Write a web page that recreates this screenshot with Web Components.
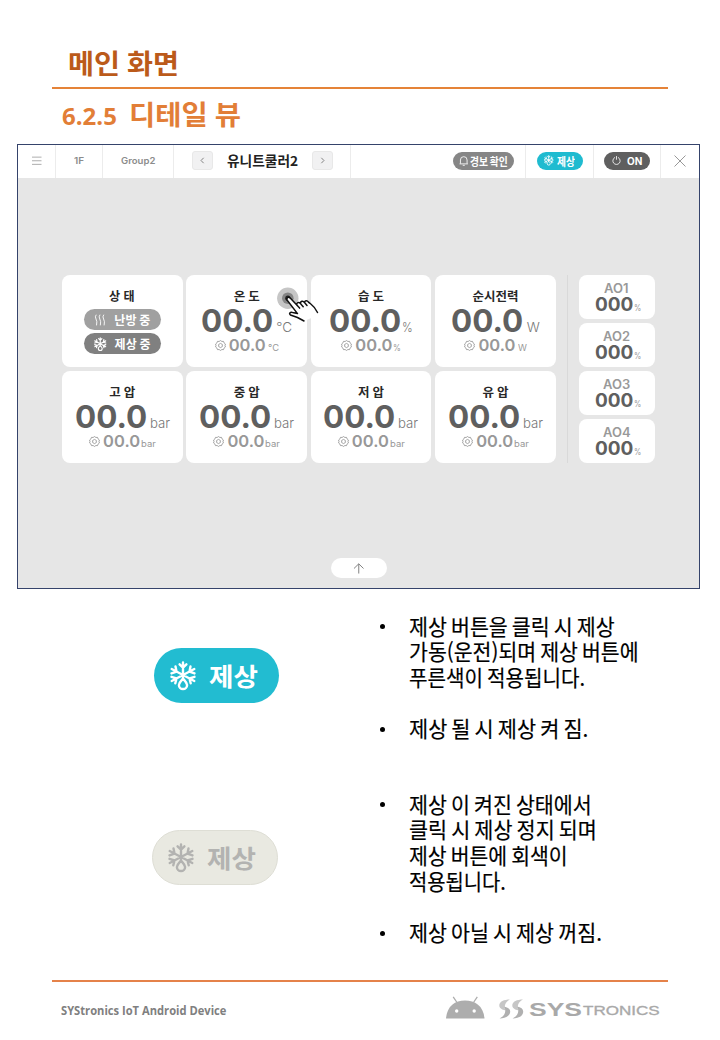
<!DOCTYPE html>
<html lang="ko">
<head>
<meta charset="utf-8">
<title>디테일 뷰</title>
<style>
html,body{margin:0;padding:0;background:#fff}
body{width:720px;height:1040px;overflow:hidden;font-family:"Noto Sans CJK KR","Noto Sans",sans-serif}
</style>
</head>
<body>
<manual-page></manual-page>
<script>
const define=(name,html,setup)=>{
  customElements.define(name,class extends HTMLElement{
    connectedCallback(){
      if(this.shadowRoot)return;
      const root=this.attachShadow({mode:'open'});
      const t=document.createElement('template');
      t.innerHTML=typeof html==='function'?html(this):html;
      root.appendChild(document.importNode(t.content,true));
      if(setup)setup(this,root);
    }
  });
};

const ICONS={
  menu:['0 0 10 10','<path d="M0 1.2h10M0 5h10M0 8.8h10" stroke-width="1"/>'],
  left:['0 0 10 10','<path d="M6.3 2 3.4 5l2.9 3" stroke-width="1"/>'],
  right:['0 0 10 10','<path d="M3.7 2 6.6 5 3.7 8" stroke-width="1"/>'],
  close:['0 0 12 12','<path d="M.5.5l11 11M11.5.5l-11 11" stroke-width=".9"/>'],
  up:['0 0 14 12','<path d="M7 11.5V1M1.8 6 7 .9 12.2 6" stroke-width="1"/>'],
  bell:['0 0 10 10','<path d="M1.500 8V4.200a3.500 3.500 0 0 1 7 0V8M.6 8.300h8.800M3.900 9.800h2.200" stroke-width=".9" stroke-linejoin="round"/>'],
  power:['0 0 10 10','<path d="M3 1.700A4.100 4.100 0 1 0 7 1.700M5 .5v3.200" stroke-width=".9" stroke-linecap="round"/>'],
  heat:['0 0 12 12','<path d="M2 1q-1.400 1.800 0 4t.6 6M5.800 1q-1.400 1.800 0 4t.6 6M9.600 1q-1.400 1.800 0 4t.6 6" stroke-width=".9" stroke-linecap="round"/>'],
  gear:['0 0 12 12','<path d="M6 .6l1.500 1 1.800-.1.6 1.700 1.500 1.200L10.900 6l.5 1.600-1.500 1.200-.6 1.700-1.800-.1L6 11.400l-1.500-1-1.800.1-.6-1.700L.6 7.600 1.100 6 .6 4.400l1.500-1.200.6-1.700 1.800.1z" stroke-width=".85" stroke-linejoin="round"/><path d="M6 3.700 8 4.850v2.300L6 8.300 4 7.150v-2.300z" stroke-width=".85"/>'],
  snow:['0 0 26 29','<g stroke-width="2.400" stroke-linecap="round" stroke-linejoin="round"><path d="M13 1.500v15M9.600 3.300 13 6.700l3.400-3.400M1.700 8 13 14M24.300 8 13 14M1.700 20 13 14M24.300 20 13 14M1.500 12.400l5-1.800L5.500 5.500M24.500 12.400l-5-1.800L20.500 5.500M1.500 15.800l5 1.600-1.200 4.900M24.500 15.800l-5 1.600 1.200 4.900"/><path d="M13 17.600c-1.800 2.300-4.100 4-4.100 6.300a4.100 4.100 0 0 0 8.200 0c0-2.300-2.300-4-4.100-6.300z"/></g>'],
};

define('ui-icon',h=>{
  const i=ICONS[h.getAttribute('name')];
  return `<style>:host{display:block;flex:none;width:${h.getAttribute('w')}px;height:${h.getAttribute('h')||h.getAttribute('w')}px}svg{display:block;width:100%;height:100%;overflow:visible}</style>
  <svg viewBox="${i[0]}" fill="none" stroke="currentColor">${i[1]}</svg>`;
});

define('round-button',`<style>
:host{display:flex;align-items:center;justify-content:center;box-sizing:border-box;flex:none;
 width:var(--w);height:var(--h,18px);border-radius:40px;background:var(--bg);color:#fff;gap:var(--gap,3px)}
</style><slot></slot>`);

define('nav-cell',`<style>
:host{display:flex;align-items:center;justify-content:center;box-sizing:border-box;height:100%;padding-bottom:2px;
 border-right:1px solid #ececec;color:#8c8c8c;font:600 9px/12px Inter,sans-serif}
:host([last]){border-right:0}
</style><slot></slot>`);

define('step-button',`<style>
:host{display:flex;align-items:center;justify-content:center;box-sizing:border-box;width:21px;height:19px;
 border:1px solid #e8e8e8;border-radius:3px;background:#f1f1f2;color:#777}
</style><slot></slot>`);

define('top-bar',`<style>
:host{display:flex;height:33px;background:#fff}
.t{color:#222;font:700 13.500px/20px "Noto Sans CJK KR",sans-serif;margin-top:-1px}
.k{font:700 10.800px/16px "Noto Sans CJK KR",sans-serif;word-spacing:-1px}
.on{font:700 10px/16px Inter,sans-serif}
</style>
<nav-cell style="width:38px"><ui-icon name="menu" w="9.500" style="color:#aaa"></ui-icon></nav-cell>
<nav-cell style="width:47px"><fit-text w="10">1F</fit-text></nav-cell>
<nav-cell style="width:71px"><fit-text w="34">Group2</fit-text></nav-cell>
<nav-cell style="width:177px;gap:14px"><step-button><ui-icon name="left" w="9"></ui-icon></step-button><fit-text class="t" w="71">유니트쿨러2</fit-text><step-button><ui-icon name="right" w="9"></ui-icon></step-button></nav-cell>
<nav-cell style="width:175px;justify-content:flex-end;padding-right:11px"><round-button style="--w:61px;--bg:#868686;--gap:2px"><ui-icon name="bell" w="9.500"></ui-icon><fit-text class="k" w="38">경보 확인</fit-text></round-button></nav-cell>
<nav-cell style="width:68px"><round-button style="--w:46px;--bg:#1fbbd0;--gap:4px"><ui-icon name="snow" w="9.500" h="10.500"></ui-icon><fit-text class="k" w="18">제상</fit-text></round-button></nav-cell>
<nav-cell style="width:67px"><round-button style="--w:46px;--bg:#5f5f5f;--gap:6px"><ui-icon name="power" w="9"></ui-icon><fit-text class="on" w="15">ON</fit-text></round-button></nav-cell>
<nav-cell last style="width:38px"><ui-icon name="close" w="12"></ui-icon></nav-cell>`);

define('meter-card',h=>{
  const u=h.getAttribute('unit');
  const m={'°C':[16,11,3,2],'%':[11,7.500,1.500,1],'W':[13,8.500,3.500,2.500],'bar':[20.500,14.500,3,1]}[u];
  return `<style>
:host{display:flex;flex-direction:column;align-items:center;box-sizing:border-box;padding-top:12px;border-radius:8px;background:#fff}
.n{font:700 12.500px/18px "Noto Sans CJK KR",sans-serif;color:#282828;word-spacing:-.5px}
.v,.s{display:flex;align-items:baseline;font-family:Inter,sans-serif}
.v{height:32px;line-height:32px;color:#5f5f5f;gap:${m[2]}px}
.s{height:16px;line-height:16px;color:#989898;gap:${m[3]}px;margin-top:0}
.v b{font-size:31px;font-weight:700;line-height:32px}.v i{font:300 13.500px/16px Inter,sans-serif;color:#777}
.s b{font-size:16.500px;font-weight:600;line-height:16px}.s i{font:400 8.500px/10px Inter,sans-serif}
ui-icon{align-self:center;margin-right:${3-m[3]}px;color:#8c8c8c}
</style>
<div class="n"><fit-text w="${h.getAttribute('tw')||26}">${h.getAttribute('name')}</fit-text></div>
<div class="v"><b><fit-text w="72">00.0</fit-text></b><i><fit-text w="${m[0]}">${u}</fit-text></i></div>
<div class="s"><ui-icon name="gear" w="11"></ui-icon><b><fit-text w="37">00.0</fit-text></b><i><fit-text w="${m[1]}">${u}</fit-text></i></div>`;
});

define('state-card',`<style>
:host{display:flex;flex-direction:column;align-items:center;box-sizing:border-box;padding-top:12px;border-radius:8px;background:#fff}
.n{font:700 12.500px/18px "Noto Sans CJK KR",sans-serif;color:#282828}
round-button{margin-top:3px;font:700 12px/20px "Noto Sans CJK KR",sans-serif;word-spacing:-.5px}
.a{margin-top:4px}
</style>
<div class="n"><fit-text w="26">상 태</fit-text></div>
<round-button class="a" style="--w:77px;--h:21px;--bg:#a0a0a0;--gap:8px"><ui-icon name="heat" w="12"></ui-icon><fit-text w="36">난방 중</fit-text></round-button>
<round-button style="--w:77px;--h:21px;--bg:#808080;--gap:8px"><ui-icon name="snow" w="12.500" h="14"></ui-icon><fit-text w="36">제상 중</fit-text></round-button>`);

define('output-card',h=>`<style>
:host{display:flex;flex-direction:column;align-items:center;box-sizing:border-box;padding-top:6px;border-radius:8px;background:#fff;font-family:Inter,sans-serif}
.l{font-size:12.500px;font-weight:600;line-height:15px;color:#999}
.r{display:flex;align-items:baseline;gap:1px;color:#5f5f5f;margin-left:2px}
.r b{font-size:18.500px;line-height:16px}.r i{font:400 8.500px/10px Inter,sans-serif;color:#999}
</style>
<div class="l"><fit-text w="${h.getAttribute('lw')}">${h.getAttribute('name')}</fit-text></div>
<div class="r"><b><fit-text w="38">000</fit-text></b><i><fit-text w="7">%</fit-text></i></div>`);

define('touch-pointer',`<style>
:host{position:absolute;left:258px;top:142px;width:46px;height:40px}
svg{display:block}
</style>
<svg width="46" height="40" viewBox="276 287 46 40">
<circle cx="287.800" cy="298.200" r="10.700" fill="#c6c6c6"/><circle cx="287.800" cy="298.200" r="5.800" fill="#858585"/><circle cx="287.800" cy="298.200" r="2.600" fill="#222"/>
<path d="M304 321l-6.500-3.500-7-2.500c-2-1.300-.3-3.300 2-2.600l5 1.200-10.300-13.300c-1.300-2 1.200-4 3-2.200l6.600 7c-.5-2.500 2-3.600 3.700-1.500-.2-2.500 2.400-3.300 4-1.100.3-2 2.300-2.200 4-.4l5 5.500 4 8z" fill="#fff"/>
<path d="M304 321l-6.500-3.500-7-2.500c-2-1.300-.3-3.300 2-2.600l5 1.200-10.300-13.300c-1.300-2 1.200-4 3-2.200l6.600 7 2.800 3M296.800 305.100c-.5-2.500 2-3.600 3.700-1.500l2.700 3.200M300.500 303.600c-.2-2.500 2.400-3.300 4-1.100l2.500 3M304.500 302.500c.3-2 2.500-2.400 4-.4 3 2.700 5.500 3.200 9 10.400" fill="none" stroke="#111" stroke-width="1.500" stroke-linecap="round" stroke-linejoin="round"/>
</svg>`);

define('device-screen',`<style>
:host{display:flex;flex-direction:column;position:relative;box-sizing:border-box;width:683px;height:445px;margin-left:17px;border:1px solid #35436b;background:#e6e6e6}
.board{display:flex;margin:97px 0 0 44px;height:188px}
.grid{display:grid;grid-template:92px 92px/repeat(4,120.700px);gap:4px 3.700px}
.rule{width:1px;margin:0 11px 0 11px;background:#d9d9d9}
.outs{display:grid;grid-template-rows:repeat(4,44px);gap:4px;width:76px}
.up{margin:95px 0 0 312.500px}
</style>
<top-bar></top-bar>
<div class="board">
<div class="grid">
<state-card></state-card><meter-card name="온 도" unit="°C"></meter-card><meter-card name="습 도" unit="%"></meter-card><meter-card name="순시전력" tw="46" unit="W"></meter-card>
<meter-card name="고 압" unit="bar"></meter-card><meter-card name="중 압" unit="bar"></meter-card><meter-card name="저 압" unit="bar"></meter-card><meter-card name="유 압" unit="bar"></meter-card>
</div>
<div class="rule"></div>
<div class="outs"><output-card name="AO1" lw="25"></output-card><output-card name="AO2" lw="27"></output-card><output-card name="AO3" lw="27"></output-card><output-card name="AO4" lw="28"></output-card></div>
</div>
<round-button class="up" style="--w:56px;--h:20px;--bg:#fff;color:#777"><ui-icon name="up" w="13.500" h="11"></ui-icon></round-button>
<touch-pointer></touch-pointer>`);

define('note-item',`<style>
:host{display:grid;grid-template-columns:29px 1fr;font:400 21.500px/25.700px "Noto Sans CJK KR",sans-serif;color:#000;word-spacing:-1.800px;-webkit-text-stroke:.2px #000}
.dot{width:5px;height:5px;border-radius:50%;background:#000;margin-top:11.500px}
</style><span class="dot"></span><div><slot></slot></div>`);

define('defrost-sample',h=>`<style>
:host{display:block;font:700 25.500px/30px "Noto Sans CJK KR",sans-serif}
round-button{justify-content:flex-start;padding-left:16px;--gap:13px}
.off{border:1.500px solid #deded5;padding-left:15px}
fit-text{margin-top:-2px}
</style>
<round-button class="${h.getAttribute('state')}" style="${h.getAttribute('state')==='off'?'--w:126px;--h:55px;--bg:#e9e9e1;color:#b3b3b1':'--w:125px;--h:55px;--bg:#22bcd1'}"><ui-icon name="snow" w="26" h="29"></ui-icon><fit-text w="49">제상</fit-text></round-button>`);

define('brand-footer',`<style>
:host{display:flex;box-sizing:border-box;height:58px;margin:0 52px;border-top:2px solid #e5824a;color:#808080}
.d{font:700 11.500px/16px "Open Sans",sans-serif;margin:21px 0 0 9px;width:385px}
.logo{display:flex;margin-top:14px}
.a{margin-right:14px}
.s{font:700 18px/20px "Liberation Sans",sans-serif;color:#a9a9a9;margin:4px 1px 0 5px}
.t{font:400 13.500px/16px "Liberation Sans",sans-serif;color:#a9a9a9;margin-top:7px;-webkit-text-stroke:.35px #a9a9a9}
</style>
<div class="d"><fit-text w="165">SYStronics IoT Android Device</fit-text></div>
<div class="logo">
<svg class="a" width="39" height="23" viewBox="0 0 39 23"><path d="M0 22.500C1 10 9 4.500 19 4.500S37.500 10 38.500 22.500z" fill="#adadad"/><path d="M11 6.500 7.200.8M27.500 6.500 31.300.8" stroke="#adadad" stroke-width="1.300"/><circle cx="10.700" cy="15" r="1.700" fill="#fff"/><circle cx="28.200" cy="15" r="1.700" fill="#fff"/></svg>
<svg width="25" height="23" viewBox="0 0 25 23"><defs><g id="s"><path d="M11 3.500C5 3.500.3 5.500.3 9.500c0 2.600 2.500 4 6.200 5C4.700 10.500 6 6 11 3.500z" fill="#c6c6c6"/><path d="M.5 22.500c6 0 10.700-2.500 10.700-7 0-2.700-2.200-4-6.200-5 2.500 4 1.500 9-4.500 12z" fill="#b0b0b0"/></g></defs><use href="#s"/><use href="#s" x="13"/></svg>
<div class="s"><fit-text w="53">SYS</fit-text></div><div class="t"><fit-text w="77">TRONICS</fit-text></div>
</div>`);

define('manual-page',`<style>
:host{display:flex;flex-direction:column;width:720px;height:1040px;background:#fff}
header{margin:0 52px;height:89px;border-bottom:2px solid #e58338;box-sizing:border-box}
h1,h2{margin:0;font-weight:700;font-size:27px;line-height:36px;word-spacing:-1px}
h1{padding:45px 0 0 15.500px;color:#bb5a1a}
h2{display:flex;height:55px;box-sizing:border-box;padding:6.500px 0 0 62px;color:#e27e37}
.no{font-family:"Open Sans",sans-serif;font-size:24px;margin:2px 12px 0 0}
main{display:grid;grid-template-columns:380px 290px;grid-template-rows:178px 190px;height:391px;padding-top:23.500px;box-sizing:border-box}
.on{padding:35.500px 0 0 153.500px}.off{padding:39.500px 0 0 152px}
note-item+note-item{margin-top:25.700px}
</style>
<header><h1><fit-text w="111">메인 화면</fit-text></h1></header>
<h2><fit-text class="no" w="55">6.2.5</fit-text><fit-text w="112">디테일 뷰</fit-text></h2>
<device-screen></device-screen>
<main>
<defrost-sample class="on" state="on"></defrost-sample>
<div><note-item><fit-text w="206">제상 버튼을 클릭 시 제상</fit-text><fit-text w="230">가동(운전)되며 제상 버튼에</fit-text><fit-text w="176">푸른색이 적용됩니다.</fit-text></note-item>
<note-item><fit-text w="179">제상 될 시 제상 켜 짐.</fit-text></note-item></div>
<defrost-sample class="off" state="off"></defrost-sample>
<div><note-item><fit-text w="183">제상 이 켜진 상태에서</fit-text><fit-text w="188">클릭 시 제상 정지 되며</fit-text><fit-text w="159">제상 버튼에 회색이</fit-text><fit-text w="97">적용됩니다.</fit-text></note-item>
<note-item><fit-text w="193">제상 아닐 시 제상 꺼짐.</fit-text></note-item></div>
</main>
<brand-footer></brand-footer>`);

/* One line of text, scaled horizontally to the width given in "w". */
define('fit-text','<style>:host{display:block;flex:none;white-space:nowrap;font-style:normal}span{display:inline-block;transform-origin:0 50%}</style><span><slot></slot></span>',(h,root)=>{
  const s=root.querySelector('span'),w=+h.getAttribute('w');
  h.style.width=w+'px';
  s.style.transform=`scaleX(${w/s.offsetWidth})`;
});
</script>
</body>
</html>
